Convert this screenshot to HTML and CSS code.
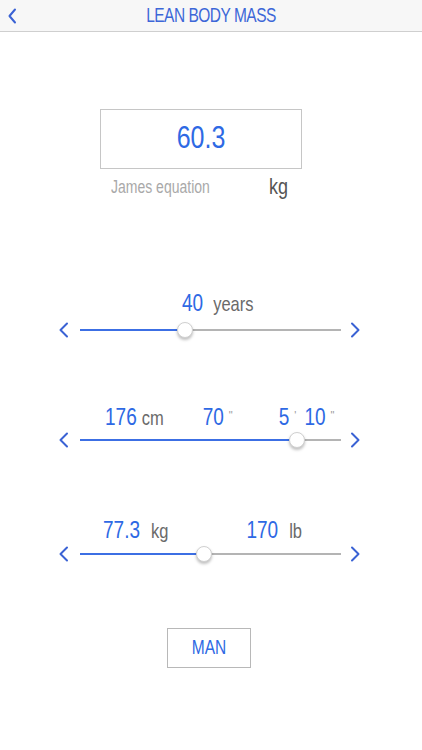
FILE: index.html
```html
<!DOCTYPE html>
<html lang="en">
<head>
<meta charset="UTF-8">
<meta name="viewport" content="width=device-width, initial-scale=1.0">
<title>Lean Body Mass</title>
<link rel="stylesheet" href="styles.css">
</head>
<body>
<header class="nav">
    <button type="button" class="nav-back">
        <svg width="10" height="16" viewBox="0 0 10 16"><path d="M8 1.5 L2.5 8 L8 14.5" /></svg>
    </button>
    <h1 class="nav-title">LEAN BODY MASS</h1>
    <span></span>
</header>

<section class="result">
    <div class="result-box"><span class="tall">60.3</span></div>
    <div class="result-caption">
        <span class="formula">James equation</span>
        <span class="unit-big">kg</span>
    </div>
</section>

<!-- age -->
<section class="slider slider-age">
    <div class="slider-values">
        <span class="num">40</span>
        <span class="unit">years</span>
    </div>
    <div class="slider-control">
        <svg class="chev" width="12" height="16" viewBox="0 0 12 16"><path d="M10 1.5 L3.5 8 L10 14.5" /></svg>
        <div class="track">
            <div class="track-fill" style="width: 40.2%"></div>
            <span class="thumb" style="left: 40.2%"></span>
        </div>
        <svg class="chev" width="12" height="16" viewBox="0 0 12 16"><path d="M2 1.5 L8.5 8 L2 14.5" /></svg>
    </div>
</section>

<!-- height -->
<section class="slider slider-height">
    <div class="slider-values">
        <span class="num">176</span>
        <span class="unit">cm</span>
        <span class="num gap-inch">70</span>
        <span class="mark">&quot;</span>
        <span class="num gap-feet">5</span>
        <span class="mark">'</span>
        <span class="num gap-ten">10</span>
        <span class="mark">&quot;</span>
    </div>
    <div class="slider-control">
        <svg class="chev" width="12" height="16" viewBox="0 0 12 16"><path d="M10 1.5 L3.5 8 L10 14.5" /></svg>
        <div class="track">
            <div class="track-fill" style="width: 83.1%"></div>
            <span class="thumb" style="left: 83.1%"></span>
        </div>
        <svg class="chev" width="12" height="16" viewBox="0 0 12 16"><path d="M2 1.5 L8.5 8 L2 14.5" /></svg>
    </div>
</section>

<!-- weight -->
<section class="slider slider-weight">
    <div class="slider-values">
        <span class="num">77.3</span>
        <span class="unit">kg</span>
        <span class="num gap-lb">170</span>
        <span class="unit">lb</span>
    </div>
    <div class="slider-control">
        <svg class="chev" width="12" height="16" viewBox="0 0 12 16"><path d="M10 1.5 L3.5 8 L10 14.5" /></svg>
        <div class="track">
            <div class="track-fill" style="width: 47.5%"></div>
            <span class="thumb" style="left: 47.5%"></span>
        </div>
        <svg class="chev" width="12" height="16" viewBox="0 0 12 16"><path d="M2 1.5 L8.5 8 L2 14.5" /></svg>
    </div>
</section>

<button type="button" class="sex-btn"><span class="tall">MAN</span></button>
</body>
</html>
```

FILE: styles.css
```css
body {
    margin: 0;
    background: #fff;
    font-family: "Liberation Sans", Arial, sans-serif;
    display: flex;
    flex-direction: column;
}

.tall,
.nav-title,
.num,
.unit,
.formula,
.unit-big {
    display: inline-block;
    transform: scaleY(1.25);
}

.nav {
    height: 31px;
    background-color: #f7f7f7;
    border-bottom: 1px solid #cfcfcf;
    display: grid;
    grid-template-columns: 1fr auto 1fr;
    align-items: center;
}

.nav-back {
    justify-self: start;
    background: none;
    border: none;
    padding: 0 0 0 7px;
    height: 31px;
    display: flex;
    align-items: center;
}

.nav-back path,
.chev path {
    fill: none;
    stroke: #3a62d4;
    stroke-width: 2;
    stroke-linecap: round;
    stroke-linejoin: round;
}

.nav-title {
    margin: 0;
    font-size: 15.5px;
    font-weight: normal;
    letter-spacing: -0.5px;
    color: #3d67d8;
}

.result {
    width: 202px;
    margin: 77px 0 0 100px;
}

.result-box {
    height: 60px;
    box-sizing: border-box;
    border: 1px solid #c6c6c6;
    display: flex;
    align-items: center;
    justify-content: center;
    padding-bottom: 4px;
    font-size: 25px;
    color: #2e69e4;
}

.result-caption {
    margin-top: 6px;
    height: 24px;
    display: flex;
    justify-content: space-between;
    align-items: center;
    padding: 0 14px 0 11px;
}

.formula {
    font-size: 14px;
    color: #a9a9a9;
}

.unit-big {
    font-size: 18px;
    color: #555;
}

.slider-values {
    height: 24px;
    display: flex;
    align-items: baseline;
    line-height: 24px;
}

.num {
    font-size: 19px;
    color: #2e69e4;
}

.unit {
    font-size: 16.5px;
    color: #6a6a6a;
}

.mark {
    font-size: 11px;
    color: #9a9a9a;
    align-self: flex-start;
    line-height: 20px;
}

.slider-control {
    width: 305px;
    margin-left: 57px;
    height: 16px;
    display: flex;
    align-items: center;
}

.chev {
    flex: none;
}

.track {
    position: relative;
    width: 261px;
    height: 1.5px;
    background-color: #b4b4b4;
    margin: 0 9px 0 11px;
}

.track-fill {
    height: 100%;
    background-color: #3c6fe4;
}

.thumb {
    position: absolute;
    top: 50%;
    width: 16px;
    height: 16px;
    box-sizing: border-box;
    border-radius: 50%;
    background: #fff;
    border: 1px solid #d0d0d0;
    box-shadow: 0 2px 3px rgba(0, 0, 0, 0.25);
    transform: translate(-50%, -50%);
}

/* per row spacing */
.slider-age {
    margin-top: 92px;
}
.slider-age .slider-values {
    padding-left: 182px;
    gap: 10px;
}
.slider-age .slider-control {
    margin-top: 7px;
}

.slider-height {
    margin-top: 67px;
}
.slider-height .slider-values {
    padding-left: 105px;
    gap: 5px;
}
.slider-height .slider-control {
    margin-top: 3px;
}
.gap-inch {
    margin-left: 34px;
}
.gap-feet {
    margin-left: 41px;
}
.gap-ten {
    margin-left: 3px;
}

.slider-weight {
    margin-top: 70px;
}
.slider-weight .slider-values {
    padding-left: 103px;
    gap: 11px;
}
.slider-weight .slider-control {
    margin-top: 4px;
}
.gap-lb {
    margin-left: 67px;
}

.sex-btn {
    align-self: flex-start;
    margin: 66px 0 0 167px;
    width: 84px;
    height: 40px;
    background: #fff;
    border: 1px solid #b8b8b8;
    font-family: inherit;
    font-size: 15.5px;
    color: #2e69e4;
    cursor: pointer;
}
```
